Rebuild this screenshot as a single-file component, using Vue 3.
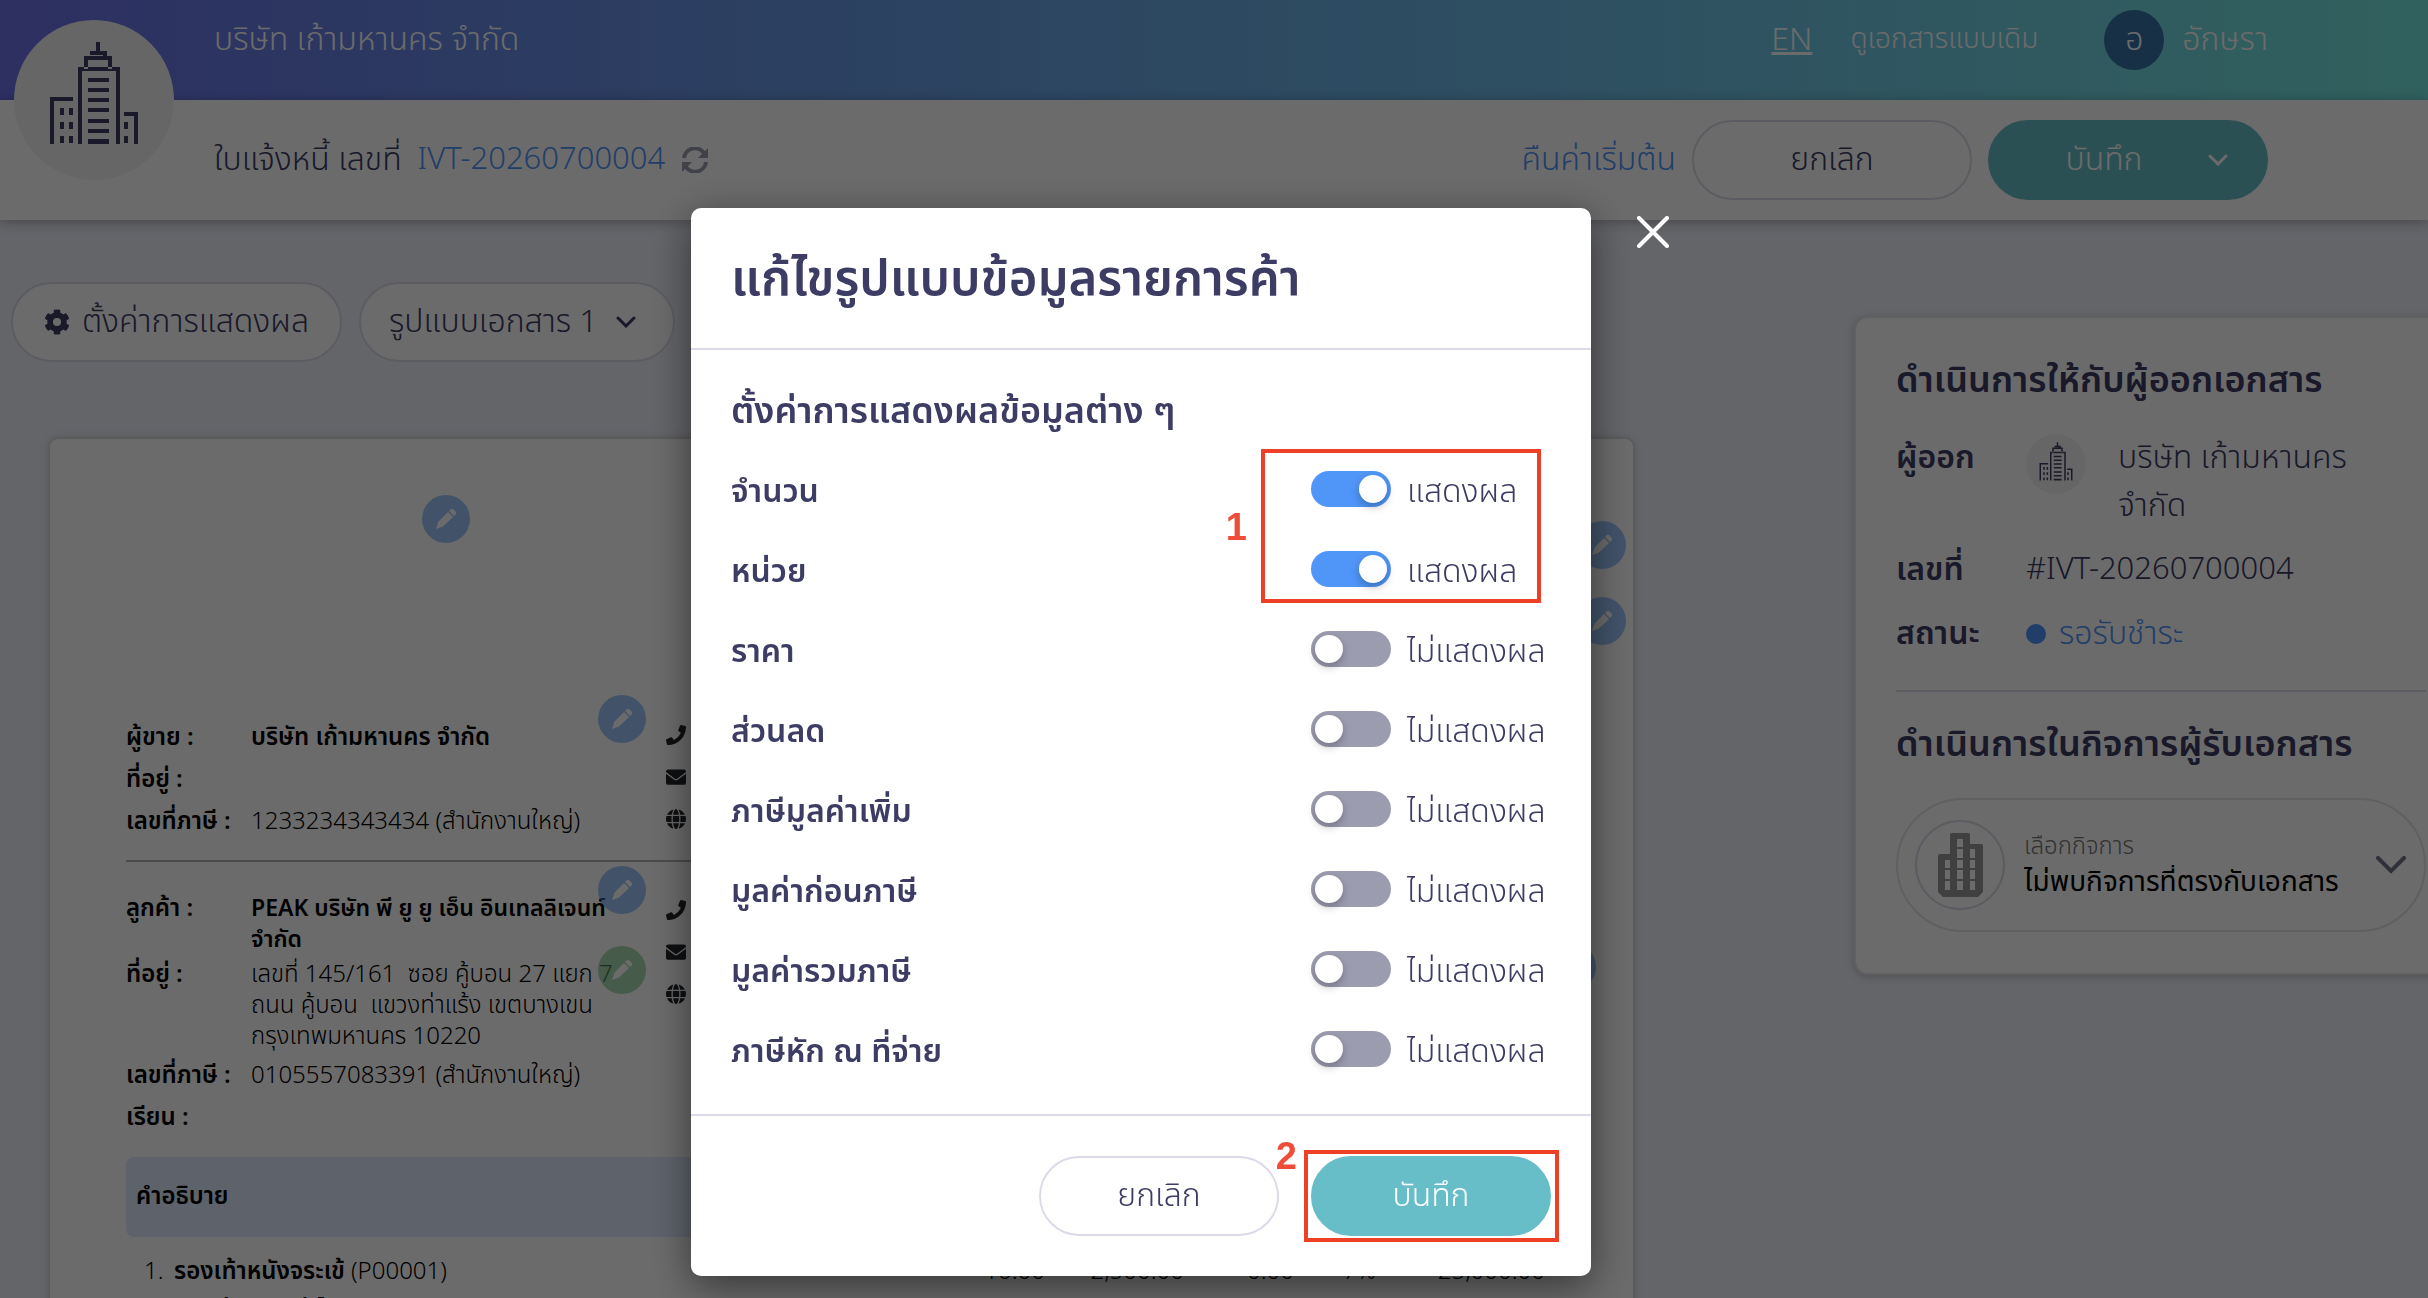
<template>
  <div class="page">
    <!-- TOP BAR -->
    <header class="topbar">
      <span class="company">บริษัท เก้ามหานคร จำกัด</span>
      <nav class="top-links">
        <a href="#" class="lang">EN</a>
        <a href="#" class="old-doc">ดูเอกสารแบบเดิม</a>
        <a href="#" class="user">
          <span class="avatar">อ</span>
          <span>อักษรา</span>
        </a>
      </nav>
    </header>

    <!-- TITLE BAR -->
    <div class="titlebar">
      <div class="doc-title">
        <span>ใบแจ้งหนี้ เลขที่</span>
        <a href="#" class="doc-no">IVT-20260700004</a>
        <svg class="refresh" viewBox="0 0 28 26">
          <path d="M3 11A11 11 0 0 1 23 6M25 15A11 11 0 0 1 5 20" />
          <path class="fill" d="M27 1v10H17zM1 25V15h10z" />
        </svg>
      </div>
      <div class="title-actions">
        <a href="#">คืนค่าเริ่มต้น</a>
        <button class="btn btn-outline btn-wide">ยกเลิก</button>
        <button class="btn btn-primary btn-wide">
          <span class="btn-label">บันทึก</span>
          <svg class="chevron" viewBox="0 0 20 12"><path d="M2 2l8 8 8-8" /></svg>
        </button>
      </div>
    </div>

    <div class="logo">
      <svg viewBox="0 0 160 160"><path :d="tower" /></svg>
    </div>

    <!-- CONTENT -->
    <main class="content">
      <div class="main-col">
        <div class="toolbar">
          <button class="btn btn-outline btn-tool">
            <svg class="gear" viewBox="0 0 512 512">
              <path d="M487 316l-43-25a192 192 0 0 0 0-70l43-25c5-3 7-8 6-14-11-36-30-68-55-95-4-4-10-5-14-2l-43 25a192 192 0 0 0-61-35V25c0-5-4-10-9-11a257 257 0 0 0-110 0c-5 1-9 6-9 11v50a192 192 0 0 0-61 35L88 85c-4-3-10-2-14 2-25 27-44 59-55 95-1 6 1 11 6 14l43 25a192 192 0 0 0 0 70l-43 25c-5 3-7 8-6 14 11 36 30 68 55 95 4 4 10 5 14 2l43-25a192 192 0 0 0 61 35v50c0 5 4 10 9 11 36 8 74 8 110 0 5-1 9-6 9-11v-50a192 192 0 0 0 61-35l43 25c4 3 10 2 14-2 25-27 44-59 55-95 1-6-1-11-6-14zM256 336a80 80 0 1 1 0-160 80 80 0 0 1 0 160z" />
            </svg>
            ตั้งค่าการแสดงผล
          </button>
          <div class="select-wrap">
            <select v-model="template" class="btn btn-outline" aria-label="รูปแบบเอกสาร">
              <option>รูปแบบเอกสาร 1</option>
            </select>
            <svg class="chevron" viewBox="0 0 20 12"><path d="M2 2l8 8 8-8" /></svg>
          </div>
        </div>

        <article class="paper">
          <section v-for="(party, i) in parties" :key="i" class="party" :class="{ buyer: i === 1 }">
            <dl>
              <div v-for="row in party" :key="row.label" class="party-row">
                <dt>{{ row.label }} :</dt>
                <dd :class="{ strong: row.strong }">
                  <div v-for="line in row.lines" :key="line">{{ line }}</div>
                </dd>
              </div>
            </dl>
            <div class="contacts">
              <svg viewBox="0 0 512 512"><path d="M493 25L389 1c-11-3-23 3-27 14l-48 112c-4 10-1 21 7 28l60 50a371 371 0 0 1-177 177l-50-60c-7-8-18-11-28-7L14 363c-10 4-16 16-14 27l24 104c3 11 12 18 24 18 256 0 464-207 464-464 0-12-8-21-19-23z" /></svg>
              <svg viewBox="0 0 512 512"><path d="M0 130v-10a56 56 0 0 1 56-56h400a56 56 0 0 1 56 56v10L284 298c-18 13-38 13-56 0zM0 170l210 155c28 20 64 20 92 0l210-155v230a56 56 0 0 1-56 56H56a56 56 0 0 1-56-56z" /></svg>
              <svg viewBox="0 0 24 24"><path d="M8.500 7C9 3 10.500 0 12 0s3 3 3.500 7zM17 7C16.600 4.500 16 2.200 15 .5A12 12 0 0 1 22.800 7zM7 7H1.200A12 12 0 0 1 9 .5C8 2.200 7.400 4.500 7 7zM.6 8.500h6.200a36 36 0 0 0 0 7H.6a12 12 0 0 1 0-7zM8.300 8.500h7.400a36 36 0 0 1 0 7H8.300a36 36 0 0 1 0-7zM17.200 8.500h6.200a12 12 0 0 1 0 7h-6.200a36 36 0 0 0 0-7zM8.500 17h7c-.5 4-2 7-3.500 7s-3-3-3.500-7zM17 17h5.800a12 12 0 0 1-7.800 6.500c1-1.700 1.600-4 2-6.500zM7 17H1.200A12 12 0 0 0 9 23.500C8 21.800 7.400 19.500 7 17z" /></svg>
            </div>
          </section>

          <table class="items">
            <thead>
              <tr>
                <th colspan="7">คำอธิบาย</th>
              </tr>
            </thead>
            <tbody>
              <tr>
                <td class="no">1.</td>
                <td>
                  <b>รองเท้าหนังจระเข้</b> (P00001)
                  <div class="note">รองเท้าหนังแท้ ไซส์ 40</div>
                </td>
                <td v-for="a in amounts" :key="a.text" class="num" :style="{ width: a.width + 'px' }">
                  {{ a.text }}
                </td>
              </tr>
            </tbody>
          </table>

          <button
            v-for="(pin, i) in pins"
            :key="i"
            class="pin"
            :class="{ green: pin.green }"
            :style="{ left: pin.x + 'px', top: pin.y + 'px' }"
            aria-label="แก้ไข"
          >
            <svg viewBox="0 0 20 20"><path d="M12 3l5 5L7 17.500 0 20l2.500-7.500zM13 2l1.500-1.500a2 2 0 0 1 3 0l2 2a2 2 0 0 1 0 3L18 7z" /></svg>
          </button>
        </article>
      </div>

      <!-- SIDE PANEL -->
      <aside class="panel">
        <h2>ดำเนินการให้กับผู้ออกเอกสาร</h2>
        <dl class="info">
          <dt>ผู้ออก</dt>
          <dd class="issuer">
            <span class="mini-logo">
              <svg viewBox="0 0 160 160"><path :d="tower" /></svg>
            </span>
            <span>บริษัท เก้ามหานคร<br />จำกัด</span>
          </dd>
          <dt>เลขที่</dt>
          <dd class="doc-no">#IVT-20260700004</dd>
          <dt>สถานะ</dt>
          <dd class="status">รอรับชำระ</dd>
        </dl>
        <h2>ดำเนินการในกิจการผู้รับเอกสาร</h2>
        <div class="business">
          <span class="business-icon">
            <svg viewBox="0 0 45 64">
              <path fill-rule="evenodd" d="M0 23q0-2 2-2h10V2q0-2 2-2h16q2 0 2 2v9h11q2 0 2 2v46l-5 5H5l-5-5z M7 27h5v8H7z m0 10h5v9H7z m0 11h5v9H7z M19 6h6v8h-6z m0 10h6v9h-6z m0 11h6v8h-6z m0 10h6v9h-6z m0 11h6v9h-6z M32 16h5v9h-5z m0 11h5v8h-5z m0 10h5v9h-5z m0 11h5v9h-5z" />
            </svg>
          </span>
          <div class="business-text">
            <label for="business">เลือกกิจการ</label>
            <select id="business">
              <option>ไม่พบกิจการที่ตรงกับเอกสาร</option>
            </select>
          </div>
          <svg class="chevron big" viewBox="0 0 30 18"><path d="M2 2l13 13L28 2" /></svg>
        </div>
      </aside>
    </main>

    <!-- MODAL -->
    <div class="overlay">
      <div class="modal" role="dialog" aria-labelledby="modal-title">
        <h1 id="modal-title">แก้ไขรูปแบบข้อมูลรายการค้า</h1>
        <div class="modal-body">
          <h3>ตั้งค่าการแสดงผลข้อมูลต่าง ๆ</h3>
          <div v-for="(opt, i) in options" :key="opt.label" class="option">
            <label :for="'opt-' + i">{{ opt.label }}</label>
            <div class="switch">
              <input :id="'opt-' + i" v-model="opt.on" type="checkbox" />
              <span>{{ opt.on ? "แสดงผล" : "ไม่แสดงผล" }}</span>
            </div>
          </div>
        </div>
        <footer>
          <button class="btn btn-outline">ยกเลิก</button>
          <button class="btn btn-primary">บันทึก</button>
        </footer>

        <button class="close" aria-label="ปิด">
          <svg viewBox="0 0 32 32"><path d="M2 2l28 28M30 2L2 30" /></svg>
        </button>

        <!-- step marks -->
        <div class="mark mark-1"><span>1</span></div>
        <div class="mark mark-2"><span>2</span></div>
      </div>
    </div>
  </div>
</template>

<script setup>
import { ref } from "vue";

const tower =
  "M64 122h4V51h34v71h4V47H64zM70 36h28v13h-4v-9H74v9h-4zM76 31h6V22h4v9h7v7h-4v-3H76z" +
  "M74 58h21v4H74zM74 68h21v4H74zM74 78h21v4H74zM74 88h21v4H74zM74 99h21v4H74zM74 109h21v4H74zM74 119h21v5H74z" +
  "M36 124V77h23v4H40v43zM64 47v77h4V51zM102 51v73h4V47z" +
  "M46 88h4v7h-4zM55 88h4v7h-4zM46 102h4v7h-4zM55 102h4v7h-4zM46 116h4v7h-4zM55 116h4v7h-4z" +
  "M110 92h14v32h-4V96h-10zM110 102h4v7h-4zM110 116h4v7h-4z";

const template = ref("รูปแบบเอกสาร 1");

const parties = [
  [
    { label: "ผู้ขาย", lines: ["บริษัท เก้ามหานคร จำกัด"], strong: true },
    { label: "ที่อยู่", lines: [] },
    { label: "เลขที่ภาษี", lines: ["1233234343434 (สำนักงานใหญ่)"] },
  ],
  [
    {
      label: "ลูกค้า",
      lines: ["PEAK บริษัท พี ยู ยู เอ็น อินเทลลิเจนท์", "จำกัด"],
      strong: true,
    },
    {
      label: "ที่อยู่",
      lines: [
        "เลขที่ 145/161  ซอย คู้บอน 27 แยก 7",
        "ถนน คู้บอน  แขวงท่าแร้ง เขตบางเขน",
        "กรุงเทพมหานคร 10220",
      ],
    },
    { label: "เลขที่ภาษี", lines: ["0105557083391 (สำนักงานใหญ่)"] },
    { label: "เรียน", lines: [] },
  ],
];

const amounts = [
  { text: "10.00", width: 110 },
  { text: "2,500.00", width: 139 },
  { text: "0.00", width: 110 },
  { text: "7%", width: 82 },
  { text: "25,000.00", width: 169 },
];

// edit buttons floating over the paper
const pins = [
  { x: 372, y: 56 },
  { x: 548, y: 256 },
  { x: 548, y: 427 },
  { x: 548, y: 507, green: true },
  { x: 1528, y: 82 },
  { x: 1528, y: 158 },
  { x: 1498, y: 504 },
];

const options = ref([
  { label: "จำนวน", on: true },
  { label: "หน่วย", on: true },
  { label: "ราคา", on: false },
  { label: "ส่วนลด", on: false },
  { label: "ภาษีมูลค่าเพิ่ม", on: false },
  { label: "มูลค่าก่อนภาษี", on: false },
  { label: "มูลค่ารวมภาษี", on: false },
  { label: "ภาษีหัก ณ ที่จ่าย", on: false },
]);
</script>

<style>
body {
  margin: 0;
}
</style>

<style scoped>
* {
  box-sizing: border-box;
}

.page {
  position: relative;
  height: 100vh;
  overflow: hidden;
  background: #eef0fa;
  color: #3c3c64;
  font-family: "Noto Sans Thai", "Noto Sans", sans-serif;
  font-size: 32px;
  font-weight: 300;
  line-height: 48px;
}

h1,
h2,
h3,
dl,
dd {
  margin: 0;
}

a {
  color: #5095f8;
  text-decoration: none;
}

button,
select {
  font: inherit;
  color: inherit;
}

svg {
  display: block;
  flex: none;
}

/* TOP BAR */
.topbar {
  display: flex;
  align-items: center;
  justify-content: space-between;
  height: 100px;
  padding: 0 160px 20px 214px;
  background: linear-gradient(90deg, #6b72e8, #6998e6 31%, #6ebae9 61%, #75e6df);
  color: #fff;
}

.top-links,
.user {
  display: flex;
  align-items: center;
}

.top-links a {
  color: #fff;
}

.top-links .lang {
  margin-right: 38px;
  text-decoration: underline;
}

.old-doc {
  margin-right: 66px;
  font-size: 28px;
}

.user {
  gap: 18px;
}

.avatar {
  width: 60px;
  height: 60px;
  border-radius: 50%;
  background: #3a73a8;
  line-height: 60px;
  text-align: center;
}

/* TITLE BAR */
.titlebar {
  position: relative;
  display: flex;
  align-items: center;
  justify-content: space-between;
  height: 120px;
  padding: 0 160px 0 214px;
  background: #fff;
  box-shadow: 0 2px 12px rgba(0, 0, 0, 0.3);
}

.doc-title,
.title-actions {
  display: flex;
  align-items: center;
  gap: 16px;
}

.doc-no {
  font-size: 31px;
}

.refresh {
  width: 28px;
  height: 26px;
  fill: none;
  stroke: #9c9cae;
  stroke-width: 4;
}

.refresh .fill {
  fill: #9c9cae;
  stroke: none;
}

.logo {
  position: absolute;
  top: 20px;
  left: 14px;
  width: 160px;
  height: 160px;
  border-radius: 50%;
  background: #f4f4f4;
  fill: #3c3c64;
}

/* BUTTONS */
.btn {
  display: flex;
  align-items: center;
  justify-content: center;
  width: 240px;
  height: 80px;
  border: 2px solid #dcdae8;
  border-radius: 40px;
  background: #fff;
  cursor: pointer;
}

.btn-primary {
  border-color: #67bec9;
  background: #67bec9;
  color: #fff;
}

.btn-wide {
  width: 280px;
}

.btn-label {
  flex: 1;
  padding-left: 4px;
}

.btn-wide .chevron {
  margin-right: 32px;
}

.chevron {
  width: 20px;
  height: 12px;
  fill: none;
  stroke: currentColor;
  stroke-width: 3;
  stroke-linecap: round;
}

.chevron.big {
  width: 30px;
  height: 18px;
  color: #74748c;
  stroke-width: 4;
}

/* CONTENT */
.content {
  display: flex;
  align-items: flex-start;
  gap: 219px;
  padding: 62px 0 0 11px;
}

.main-col {
  flex: 1;
  min-width: 0;
}

.toolbar {
  display: flex;
  gap: 17px;
}

.btn-tool {
  gap: 12px;
  width: 331px;
}

.gear {
  width: 26px;
  height: 26px;
  fill: currentColor;
}

.select-wrap {
  position: relative;
}

.select-wrap select {
  width: 316px;
  padding: 0 28px;
  appearance: none;
}

.select-wrap .chevron {
  position: absolute;
  top: 34px;
  right: 39px;
}

.paper {
  position: relative;
  height: 1200px;
  margin: 75px 0 0 37px;
  padding: 278px 76px 0;
  border: 2px solid #d8d8d8;
  border-radius: 10px;
  background: #fff;
  box-shadow: 0 0 8px rgba(0, 0, 0, 0.12);
  color: #000;
  font-size: 24px;
  line-height: 31px;
}

.party {
  display: flex;
}

.party dl {
  width: 488px;
}

.party-row {
  display: grid;
  grid-template-columns: 125px 363px;
  align-content: center;
  min-height: 42px;
  padding: 2px 0;
}

.party dt,
.strong {
  font-weight: 600;
}

.party dd {
  white-space: pre;
}

.buyer {
  margin-top: 17px;
  padding-top: 30px;
  border-top: 2px solid #b4b4b4;
}

.buyer .strong {
  font-size: 23px;
}

.contacts {
  display: flex;
  flex-direction: column;
  gap: 22px;
  margin: 8px 0 0 52px;
  fill: #212529;
}

.contacts svg {
  width: 20px;
  height: 20px;
}

.items {
  width: 100%;
  margin-top: 18px;
  border-collapse: collapse;
}

.items th {
  height: 80px;
  padding: 0 10px;
  border-radius: 8px;
  background: #e0ebff;
  font-weight: 600;
  text-align: left;
}

.items td {
  padding: 20px 0 0;
  vertical-align: top;
}

.items .no {
  width: 48px;
  padding-left: 18px;
}

.items .num {
  padding-right: 12px;
  text-align: right;
}

.items b {
  font-weight: 600;
}

.note {
  padding-top: 8px;
}

.pin {
  position: absolute;
  display: flex;
  align-items: center;
  justify-content: center;
  width: 48px;
  height: 48px;
  padding: 0;
  border: 0;
  border-radius: 50%;
  background: rgba(80, 149, 248, 0.56);
}

.pin.green {
  background: rgba(112, 190, 125, 0.6);
}

.pin svg {
  width: 20px;
  height: 20px;
  fill: #fff;
}

/* SIDE PANEL */
.panel {
  flex: 0 0 612px;
  margin: 34px -38px 0 0;
  padding: 34px 38px 41px 40px;
  border: 2px solid #e4e4e4;
  border-radius: 14px;
  background: #fff;
  box-shadow: 0 2px 8px rgba(0, 0, 0, 0.2);
}

.panel h2 {
  font-size: 36px;
  font-weight: 600;
  line-height: 58px;
}

.info {
  display: grid;
  grid-template-columns: 130px 1fr;
  row-gap: 16px;
  margin-bottom: 24px;
  padding: 24px 0 32px;
  border-bottom: 2px solid #dcdae8;
}

.info dt {
  font-weight: 600;
}

.issuer {
  display: flex;
  gap: 32px;
}

.mini-logo {
  width: 60px;
  height: 60px;
  border-radius: 50%;
  background: #f4f4f4;
  fill: #3c3c64;
}

.status {
  display: flex;
  align-items: center;
  gap: 13px;
  color: #5095f8;
}

.status::before {
  content: "";
  width: 20px;
  height: 20px;
  border-radius: 50%;
  background: #5095f8;
}

.business {
  display: flex;
  align-items: center;
  height: 134px;
  margin-top: 24px;
  padding: 0 18px 0 17px;
  border: 2px solid #e4e4e4;
  border-radius: 67px;
}

.business-icon {
  display: flex;
  align-items: center;
  justify-content: center;
  width: 90px;
  height: 90px;
  margin-right: 19px;
  border: 2px solid #dcdae8;
  border-radius: 50%;
  fill: #999;
}

.business-icon svg {
  width: 45px;
  height: 64px;
}

.business-text {
  display: flex;
  flex: 1;
  flex-direction: column;
  font-size: 28px;
  line-height: 36px;
}

.business-text label {
  color: #777;
  font-size: 24px;
}

.business-text select {
  padding: 0;
  border: 0;
  appearance: none;
  background: none;
  color: #000;
  font-weight: 400;
}

/* MODAL */
.overlay {
  position: fixed;
  inset: 0;
  display: flex;
  align-items: flex-start;
  justify-content: center;
  padding: 208px 146px 0 0;
  background: rgba(0, 0, 0, 0.58);
}

.modal {
  position: relative;
  width: 900px;
  border-radius: 10px;
  background: #fff;
  box-shadow: 0 10px 40px rgba(0, 0, 0, 0.5);
}

.modal h1 {
  padding: 42px 40px 38px;
  border-bottom: 2px solid #dcdae8;
  font-size: 49px;
  font-weight: 600;
  line-height: 60px;
}

.modal-body {
  padding: 38px 40px 25px;
}

.modal h3 {
  margin-bottom: 13px;
  font-size: 36px;
  font-weight: 600;
}

.option {
  display: flex;
  align-items: center;
  justify-content: space-between;
  height: 80px;
}

.option label {
  padding-top: 6px;
  font-weight: 600;
}

.switch {
  display: flex;
  align-items: center;
  gap: 16px;
  width: 240px;
  white-space: nowrap;
}

.switch span {
  padding-top: 6px;
}

.switch input {
  display: flex;
  align-items: center;
  flex: none;
  width: 80px;
  height: 36px;
  margin: 0;
  padding: 0 4px;
  border-radius: 18px;
  appearance: none;
  background: #9c9cb0;
}

.switch input::before {
  content: "";
  width: 28px;
  height: 28px;
  border-radius: 50%;
  background: #fff;
  box-shadow: 0 4px 8px rgba(0, 0, 0, 0.25);
}

.switch input:checked {
  justify-content: flex-end;
  background: #5095f8;
}

.modal footer {
  display: flex;
  justify-content: flex-end;
  gap: 32px;
  padding: 40px;
  border-top: 2px solid #dcdae8;
}

.close {
  position: absolute;
  top: 8px;
  right: -78px;
  padding: 0;
  border: 0;
  background: none;
}

.close svg {
  width: 32px;
  height: 32px;
  stroke: #fff;
  stroke-width: 4;
  stroke-linecap: round;
}

/* STEP MARKS */
.mark {
  position: absolute;
  border: 4px solid #ed4026;
  color: #f04c3a;
  font-family: "Liberation Sans", sans-serif;
  font-size: 38px;
  font-weight: 700;
  line-height: 40px;
  pointer-events: none;
}

.mark span {
  position: absolute;
  right: calc(100% + 18px);
}

.mark-1 {
  top: 241px;
  left: 570px;
  width: 280px;
  height: 154px;
}

.mark-1 span {
  top: 54px;
}

.mark-2 {
  top: 942px;
  left: 613px;
  width: 255px;
  height: 92px;
}

.mark-2 span {
  top: -18px;
  right: calc(100% + 11px);
}
</style>
